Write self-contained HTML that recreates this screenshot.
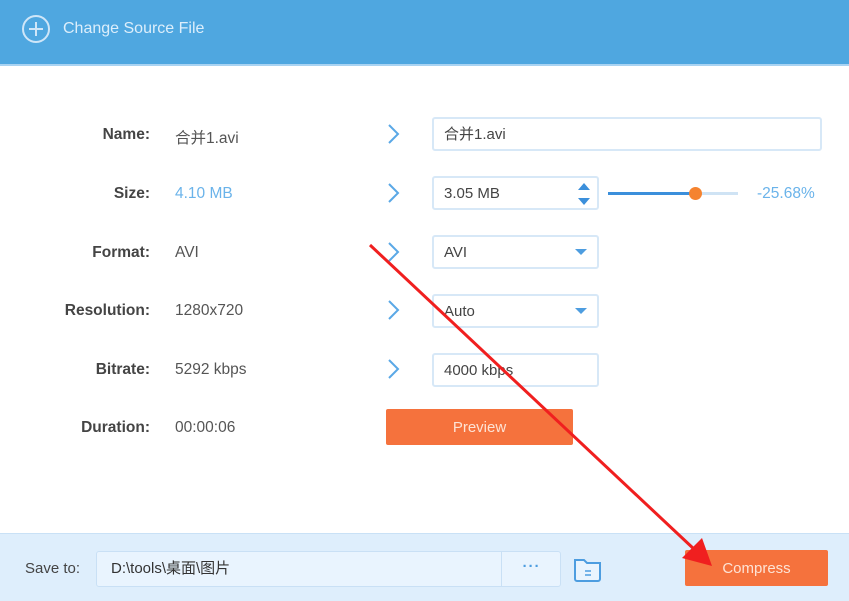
<!DOCTYPE html>
<html><head><meta charset="utf-8"><style>
*{margin:0;padding:0;box-sizing:border-box}
body{width:849px;height:601px;position:relative;background:#fff;font-family:"Liberation Sans","Noto Sans CJK SC",sans-serif;font-size:15px;color:#555;overflow:hidden}
.hdr{position:absolute;left:0;top:0;width:849px;height:66px;background:#4fa7e0;border-bottom:2px solid #a9d3f2}
.hdr span{position:absolute;left:63px;top:20px;color:#dceefb;font-size:16px}
.lbl{position:absolute;width:150px;text-align:right;font-weight:bold;color:#444;font-size:15.5px}
.val{position:absolute;left:175px;font-size:15.5px;color:#555}
.chev{position:absolute;left:386px}
.box{position:absolute;border:2px solid #d7e8f7;border-radius:3px;background:#fff;padding-left:10px;font-size:15px;color:#444;line-height:31px}
.dd:after{content:"";position:absolute;right:10px;top:12px;border:6px solid transparent;border-top:6px solid #4d9de0;border-bottom:0}
.btn{position:absolute;background:#f5723d;color:#fde3d5;text-align:center;font-size:15px;border-radius:2px}
.bot{position:absolute;left:0;top:533px;width:849px;height:68px;background:#deeefc;border-top:1px solid #c9e1f6}
</style></head><body>
<div class="hdr">
<svg style="position:absolute;left:21px;top:14px" width="30" height="30"><circle cx="15" cy="15" r="13" fill="none" stroke="#cfe6f8" stroke-width="2"/><path d="M15 8v14M8 15h14" stroke="#cfe6f8" stroke-width="2"/></svg>
<span>Change Source File</span></div>

<div class="lbl" style="top:126px">Name:</div><div class="val" style="top:126px">合并1.avi</div>
<div class="lbl" style="top:185px">Size:</div><div class="val" style="top:185px;color:#6ab3ea">4.10 MB</div>
<div class="lbl" style="top:244px">Format:</div><div class="val" style="top:244px">AVI</div>
<div class="lbl" style="top:302px">Resolution:</div><div class="val" style="top:302px">1280x720</div>
<div class="lbl" style="top:361px">Bitrate:</div><div class="val" style="top:361px">5292 kbps</div>
<div class="lbl" style="top:419px">Duration:</div><div class="val" style="top:419px">00:00:06</div>

<svg class="chev" style="top:123px" width="16" height="22"><path d="M3 2l9 9-9 9" fill="none" stroke="#5aa8e6" stroke-width="2"/></svg>
<svg class="chev" style="top:182px" width="16" height="22"><path d="M3 2l9 9-9 9" fill="none" stroke="#5aa8e6" stroke-width="2"/></svg>
<svg class="chev" style="top:241px" width="16" height="22"><path d="M3 2l9 9-9 9" fill="none" stroke="#5aa8e6" stroke-width="2"/></svg>
<svg class="chev" style="top:299px" width="16" height="22"><path d="M3 2l9 9-9 9" fill="none" stroke="#5aa8e6" stroke-width="2"/></svg>
<svg class="chev" style="top:358px" width="16" height="22"><path d="M3 2l9 9-9 9" fill="none" stroke="#5aa8e6" stroke-width="2"/></svg>

<div class="box" style="left:432px;top:117px;width:390px;height:34px">合并1.avi</div>
<div class="box" style="left:432px;top:176px;width:167px;height:34px">3.05 MB
<svg style="position:absolute;right:6px;top:3px" width="14" height="26"><path d="M1 9l6-7 6 7z M1 17l6 7 6-7z" fill="#3b8fdb"/></svg></div>
<div style="position:absolute;left:608px;top:192px;width:130px;height:3px;background:#cfe3f4"></div>
<div style="position:absolute;left:608px;top:192px;width:88px;height:3px;background:#3b8fdb"></div>
<div style="position:absolute;left:689px;top:187px;width:13px;height:13px;border-radius:50%;background:#f5832f"></div>
<div style="position:absolute;left:757px;top:185px;color:#6ab3ea;font-size:15.5px">-25.68%</div>
<div class="box dd" style="left:432px;top:235px;width:167px;height:34px">AVI</div>
<div class="box dd" style="left:432px;top:294px;width:167px;height:34px">Auto</div>
<div class="box" style="left:432px;top:353px;width:167px;height:34px">4000 kbps</div>
<div class="btn" style="left:386px;top:409px;width:187px;height:36px;line-height:38px">Preview</div>

<div class="bot">
<div style="position:absolute;left:25px;top:26px;color:#444;font-size:15px">Save to:</div>
<div style="position:absolute;left:96px;top:17px;width:465px;height:36px;border:1px solid #c9e0f5;border-radius:3px;background:#e9f4fe;padding-left:14px;line-height:34px;color:#333;font-size:15px">D:\tools\桌面\图片
<div style="position:absolute;left:404px;top:0;width:60px;height:34px;border-left:1px solid #c9e0f5;text-align:center;color:#4d9de0;line-height:30px;letter-spacing:1px;font-weight:bold">···</div></div>
<svg style="position:absolute;left:572px;top:20px" width="32" height="30"><path d="M3 6h9l3 3h13v16a2 2 0 0 1-2 2H5a2 2 0 0 1-2-2z" fill="#e9f4fe" stroke="#4d9de0" stroke-width="2"/><path d="M13 17h6M13 21h6" stroke="#4d9de0" stroke-width="1.5"/></svg>
<div class="btn" style="left:685px;top:16px;width:143px;height:36px;line-height:38px">Compress</div>
</div>

<svg style="position:absolute;left:0;top:0" width="849" height="601"><line x1="370" y1="245" x2="695" y2="550" stroke="#f01f1f" stroke-width="3"/><path d="M712 566l-30-8 20-20z" fill="#f01f1f"/></svg>
</body></html>
